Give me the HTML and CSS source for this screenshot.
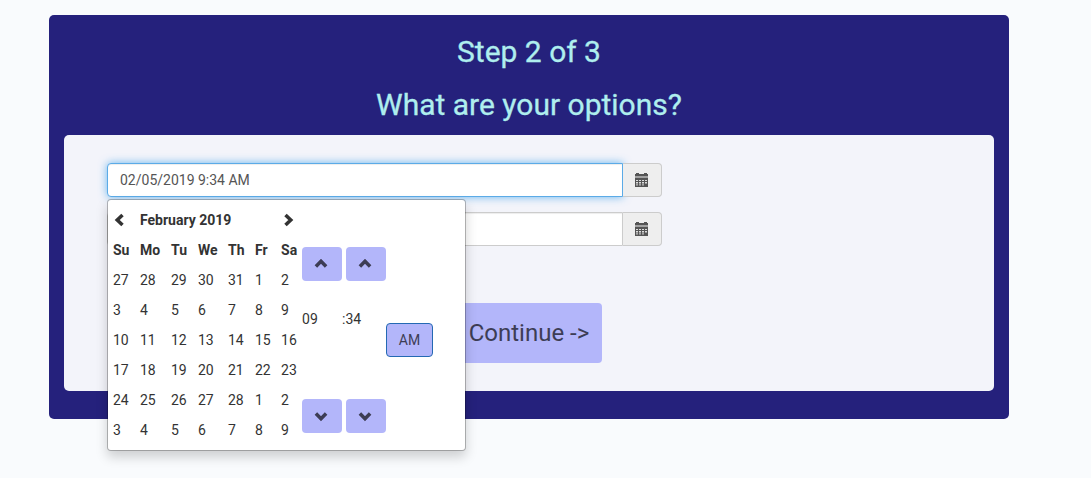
FILE: index.html
```html
<!DOCTYPE html>
<html lang="en">
<head>
<meta charset="utf-8">
<title>Step 2 of 3</title>
<link rel="stylesheet" href="styles.css">
</head>
<body>
<svg class="defs" width="0" height="0">
  <symbol id="calendar" viewBox="0 0 14 14">
    <path d="M0 1h1V0h3v1h5V0h3v1h1v2H0z"/>
    <path d="M0 3h13v2H0z" opacity=".5"/>
    <path d="M0 5h13v9H0z"/>
    <path d="M1 7.500h2M4 7.500h2M7 7.500h2M10 7.500h2M1 9.500h2M4 9.500h2M7 9.500h2M10 9.500h2M1 11.900h2M4 11.900h2M7 11.900h2" fill="none" stroke="#ddd" stroke-width="1"/>
    <path d="M1 10.500h2M4 10.500h2M7 10.500h2M10 10.500h2" fill="none" stroke="#999" stroke-width="1"/>
  </symbol>
  <symbol id="chevron" viewBox="0 0 14 14">
    <path d="M9.500 1.900 4.200 7l5.300 5.100" fill="none" stroke="currentColor" stroke-width="3.500"/>
  </symbol>
</svg>
<main class="card">
  <h2>Step 2 of 3</h2>
  <h2>What are your options?</h2>
  <form class="panel">
    <div class="group">
      <div class="field focused">02/05/2019 9:34 AM</div>
      <div class="addon"><svg class="icon"><use href="#calendar"/></svg></div>
      <div class="picker">
        <table>
          <colgroup><col class="c27"><col class="c31"><col class="c27"><col class="c30"><col class="c27"><col class="c26"><col class="c26"></colgroup>
          <tr><th><svg class="icon prev"><use href="#chevron"/></svg></th><th colspan="5">February 2019</th><th><svg class="icon next"><use href="#chevron"/></svg></th></tr>
          <tr><th>Su</th><th>Mo</th><th>Tu</th><th>We</th><th>Th</th><th>Fr</th><th>Sa</th></tr>
          <tr><td>27</td><td>28</td><td>29</td><td>30</td><td>31</td><td>1</td><td>2</td></tr>
          <tr><td>3</td><td>4</td><td>5</td><td>6</td><td>7</td><td>8</td><td>9</td></tr>
          <tr><td>10</td><td>11</td><td>12</td><td>13</td><td>14</td><td>15</td><td>16</td></tr>
          <tr><td>17</td><td>18</td><td>19</td><td>20</td><td>21</td><td>22</td><td>23</td></tr>
          <tr><td>24</td><td>25</td><td>26</td><td>27</td><td>28</td><td>1</td><td>2</td></tr>
          <tr><td>3</td><td>4</td><td>5</td><td>6</td><td>7</td><td>8</td><td>9</td></tr>
        </table>
        <div class="time">
          <div class="steps">
            <span class="btn"><svg class="icon up"><use href="#chevron"/></svg></span>
            <span class="btn"><svg class="icon up"><use href="#chevron"/></svg></span>
          </div>
          <div class="clock">
            <span class="digits">09</span><span class="digits">:34</span><span class="btn period">AM</span>
          </div>
          <div class="steps">
            <span class="btn"><svg class="icon down"><use href="#chevron"/></svg></span>
            <span class="btn"><svg class="icon down"><use href="#chevron"/></svg></span>
          </div>
        </div>
      </div>
    </div>
    <div class="group">
      <div class="field"></div>
      <div class="addon"><svg class="icon"><use href="#calendar"/></svg></div>
    </div>
    <div class="continue">Continue -&gt;</div>
  </form>
</main>
</body>
</html>
```

FILE: styles.css
```css
* { box-sizing: border-box; }
body {
  margin: 0;
  height: 478px;
  padding: 15px 0 0 49px;
  overflow: hidden;
  background: #f9fbfd;
  color: #333;
  font: 14px/20px Roboto, sans-serif;
}
.defs { display: none; }
.icon { display: block; width: 14px; height: 14px; fill: currentColor; }
.card {
  width: 960px;
  height: 404px;
  padding: 20px 15px 0;
  border-radius: 5px;
  background: #25217c;
}
h2 {
  margin: 0 0 20px;
  color: #afeeee;
  font-size: 30px;
  font-weight: 400;
  line-height: 33px;
  text-align: center;
  -webkit-text-stroke: .3px #afeeee;
}
h2 + h2 { margin-bottom: 14px; }
.panel {
  height: 256px;
  padding: 28px 43px 0;
  border-radius: 5px;
  background: #f3f4fa;
}
.group { position: relative; display: flex; width: 555px; height: 34px; margin-bottom: 15px; }
.field {
  width: 516px;
  padding: 6px 12px;
  border: 1px solid #ccc;
  border-radius: 4px 0 0 4px;
  background: #fff;
  box-shadow: inset 0 1px 1px rgba(0, 0, 0, .075);
  color: #555;
}
.focused {
  border-color: #5babe7;
  box-shadow: inset 0 1px 1px rgba(0, 0, 0, .075), 0 0 8px rgba(60, 160, 235, .75);
}
.addon {
  flex: 1;
  padding: 9px 0 0 12px;
  border: 1px solid #ccc;
  border-left: 0;
  border-radius: 0 4px 4px 0;
  background: #eee;
  color: #555;
}
.group:first-child .addon { z-index: 1; }
.picker {
  position: absolute;
  z-index: 5;
  top: 36px;
  left: 0;
  display: flex;
  width: 359px;
  height: 252px;
  padding: 5px 0;
  border: 1px solid rgba(0, 0, 0, .25);
  border-radius: 4px;
  background: #fff;
  background-clip: padding-box;
  box-shadow: 0 6px 12px rgba(0, 0, 0, .175);
}
table { width: 194px; height: 240px; border-collapse: collapse; table-layout: fixed; }
.c26 { width: 26px; }
.c27 { width: 27px; }
.c30 { width: 30px; }
.c31 { width: 31px; }
th, td { height: 30px; padding: 5px 0 5px 5px; text-align: left; white-space: nowrap; }
th { font-weight: 700; }
.next { transform: rotate(180deg); }
.up { transform: rotate(90deg); }
.down { transform: rotate(-90deg); }
.time { padding-top: 42px; }
.steps { display: flex; gap: 4px; }
.steps .btn { padding: 0 2px 1px 0; }
.btn {
  display: grid;
  place-items: center;
  width: 40px;
  height: 34px;
  border-radius: 4px;
  background: #b3b6fa;
  color: #3d3d55;
}
.clock { display: flex; height: 118px; padding-top: 28px; }
.digits { width: 40px; }
.digits + .digits { width: 44px; }
.period { width: 47px; margin-top: 14px; border: 1px solid #2469b3; }
.continue {
  width: 146px;
  height: 60px;
  margin: 57px auto 0;
  border-radius: 4px;
  background: #b3b6fa;
  color: #3d3d55;
  font-size: 24px;
  line-height: 60px;
  text-align: center;
}
```
